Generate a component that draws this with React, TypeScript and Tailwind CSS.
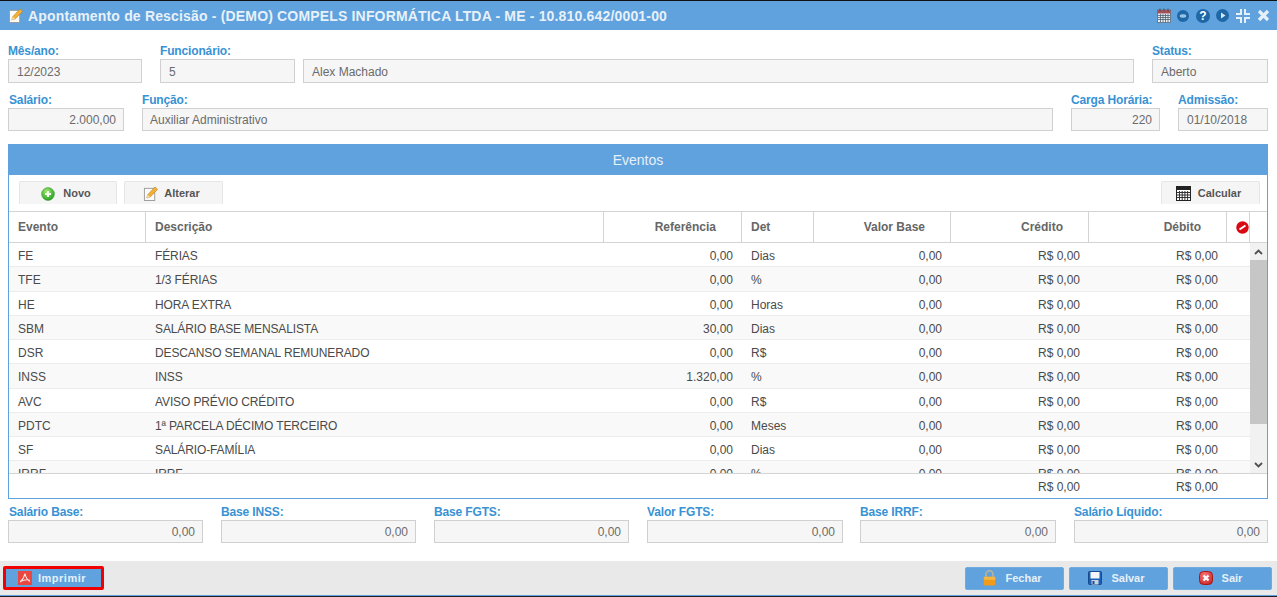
import React from "react";

const rows = [
  ["FE", "FÉRIAS", "0,00", "Dias"],
  ["TFE", "1/3 FÉRIAS", "0,00", "%"],
  ["HE", "HORA EXTRA", "0,00", "Horas"],
  ["SBM", "SALÁRIO BASE MENSALISTA", "30,00", "Dias"],
  ["DSR", "DESCANSO SEMANAL REMUNERADO", "0,00", "R$"],
  ["INSS", "INSS", "1.320,00", "%"],
  ["AVC", "AVISO PRÉVIO CRÉDITO", "0,00", "R$"],
  ["PDTC", "1ª PARCELA DÉCIMO TERCEIRO", "0,00", "Meses"],
  ["SF", "SALÁRIO-FAMÍLIA", "0,00", "Dias"],
  ["IRRF", "IRRF", "0,00", "%"],
];

function Field({ label, value, w, right, grow, pad, labelPad, tall }: { label?: string; value: string; w?: string; right?: boolean; grow?: boolean; pad?: string; labelPad?: boolean; tall?: boolean }) {
  return (
    <div className={`flex flex-col ${w ?? ""} ${grow ? "flex-1" : ""}`}>
      <div className={`h-[16px] text-[12px] leading-[16px] font-bold tracking-[-0.15px] text-[#3892d3] whitespace-nowrap ${labelPad ? "pl-[1px]" : ""}`}>{label ?? "\u00a0"}</div>
      <div className={`${tall ? "h-[24px] leading-[24px]" : "h-[23px] leading-[23px]"} border border-[#d0d0d0] bg-[#f6f6f6] text-[12px] text-[#6b6b6b] ${pad ?? "px-[8px]"} ${right ? "text-right !pr-[7px]" : ""}`}>{value}</div>
    </div>
  );
}

function Pencil({ s = 16 }: { s?: number }) {
  return (
    <svg width={s} height={s} viewBox="0 0 16 16">
      <rect x="1.5" y="2.5" width="11" height="13" fill="#fbfbfb" stroke="#9a9a9a" />
      <path d="M4 12.8 L5 9.3 L12.8 1 L15.6 3.6 L7.6 11.7 Z" fill="#f2b134" stroke="#b87a1a" strokeWidth="0.6" />
      <path d="M4 12.8 L5 9.3 L7.6 11.7 Z" fill="#f7e2b5" />
    </svg>
  );
}
function GreenPlus() {
  return (
    <svg width="14" height="14" viewBox="0 0 14 14">
      <defs><radialGradient id="g1" cx="0.4" cy="0.3" r="0.8"><stop offset="0" stopColor="#9be86a" /><stop offset="1" stopColor="#1c9a1c" /></radialGradient></defs>
      <circle cx="7" cy="7" r="6.4" fill="url(#g1)" stroke="#2a8a2a" strokeWidth="0.5" />
      <path d="M7 4v6M4 7h6" stroke="#f2fff0" strokeWidth="2.2" />
    </svg>
  );
}
function Calculator() {
  return (
    <svg width="15" height="15" viewBox="0 0 15 15">
      <rect x="0.5" y="0.5" width="14" height="14" fill="#fff" stroke="#222" />
      <rect x="1" y="1" width="13" height="3" fill="#222" />
      <path d="M1 6.5h13M1 9h13M1 11.5h13M3.5 5v9M6.2 5v9M8.9 5v9M11.6 5v9" stroke="#333" strokeWidth="1" />
    </svg>
  );
}
function NoEntry() {
  return (
    <svg width="13" height="13" viewBox="0 0 13 13">
      <circle cx="6.5" cy="6.5" r="6.2" fill="#d90812" />
      <path d="M3.5 8.5 L9.5 4.5" stroke="#fff" strokeWidth="2" />
    </svg>
  );
}
function Pdf() {
  return (
    <svg width="14" height="14" viewBox="0 0 14 14">
      <rect width="14" height="14" fill="#e8483f" />
      <path d="M7 2.5 C6.2 6 4.5 9 2 11 M7 2.5 C7.6 6 9.5 9 12 10.5 M2.5 10.5 C6 8.7 9 8.4 11.8 9.2" fill="none" stroke="#fbe4e0" strokeWidth="1.1" />
    </svg>
  );
}
function Lock() {
  return (
    <svg width="13" height="16" viewBox="0 0 13 16">
      <path d="M3 7V4.2a3.5 3.5 0 0 1 7 0V7" fill="none" stroke="#b9b39b" strokeWidth="1.6" />
      <rect x="0.8" y="6.8" width="11.4" height="8.6" rx="1" fill="#f09a1e" />
      <rect x="0.8" y="6.8" width="11.4" height="3" fill="#f6b73f" />
    </svg>
  );
}
function Floppy() {
  return (
    <svg width="14" height="14" viewBox="0 0 14 14">
      <rect x="0.5" y="0.5" width="13" height="13" rx="1" fill="#1c5fb5" stroke="#174b90" />
      <rect x="2.5" y="1" width="9" height="6.5" fill="#f2f6fb" />
      <rect x="3.5" y="9" width="7" height="4.5" fill="#c9d4e2" />
      <rect x="4.5" y="10" width="2" height="3" fill="#1c4f95" />
    </svg>
  );
}
function RedX() {
  return (
    <svg width="14" height="14" viewBox="0 0 14 14">
      <defs><radialGradient id="r1" cx="0.4" cy="0.3" r="0.85"><stop offset="0" stopColor="#f77" /><stop offset="1" stopColor="#c41c1c" /></radialGradient></defs>
      <rect x="0.5" y="0.5" width="13" height="13" rx="4" fill="url(#r1)" stroke="#a51a1a" />
      <path d="M4.5 4.5l5 5M9.5 4.5l-5 5" stroke="#fff" strokeWidth="2.2" />
    </svg>
  );
}
function Calendar() {
  return (
    <svg width="14" height="15" viewBox="0 0 14 15">
      <rect x="0.5" y="2" width="13" height="12.5" fill="#e9eef2" stroke="#5b6a78" strokeWidth="0.8" />
      <rect x="0.5" y="2" width="13" height="3.5" fill="#a6505a" />
      <path d="M3 0.5v3M7 0.5v3M11 0.5v3" stroke="#44525f" />
      <path d="M1 7.5h12M1 9.5h12M1 11.5h12M3.5 6v8M6 6v8M8.5 6v8M11 6v8" stroke="#4e5f70" strokeWidth="0.8" />
    </svg>
  );
}

const gridBody = "grid grid-cols-[137px_458px_138px_72px_137px_138px_138px_23px]";

function Tab({ icon, label, w, gap }: { icon: React.ReactNode; label: string; w: string; gap: string }) {
  return (
    <div className={`${w} ${gap} h-[23px] pr-[4px] pt-[1px] flex items-center justify-center bg-[#f5f5f5] border border-b-0 border-[#e6e6e6] rounded-t-[2px] text-[11px] font-bold text-[#555]`}>
      {icon}
      <span>{label}</span>
    </div>
  );
}

function FootBtn({ icon, label, w }: { icon: React.ReactNode; label: string; w: string }) {
  return (
    <div className={`${w} h-[23px] pr-[4px] flex items-center justify-center gap-[9px] bg-[#5fa2dd] border border-[#70abdf] rounded-[2px] text-[11px] font-bold text-[#e6f0f9]`}>
      {icon}
      <span>{label}</span>
    </div>
  );
}

export default function App() {
  return (
    <div className="h-[597px] w-[1277px] overflow-hidden flex flex-col bg-white font-['Liberation_Sans',Arial,sans-serif]">
      <div className="h-[1px] bg-[#111]" />
      <div className="h-[29px] shrink-0 bg-[#5fa2dd] flex items-center pl-[8px] pr-[7px]">
        <Pencil s={15} />
        <div className="ml-[5px] pt-[1px] text-[14px] font-bold text-[#e8f1f9] tracking-[0.17px] whitespace-nowrap">
          Apontamento de Rescisão - (DEMO) COMPELS INFORMÁTICA LTDA - ME - 10.810.642/0001-00
        </div>
        <div className="ml-auto flex items-center">
          <Calendar />
          <svg width="12" height="12" viewBox="0 0 12 12" className="ml-[6px]">
            <circle cx="6" cy="6" r="6" fill="#1f68a8" />
            <rect x="3.2" y="4.8" width="5.6" height="2.4" rx="1.2" fill="#8fbbe0" stroke="#cfe3f3" strokeWidth="0.6" />
          </svg>
          <svg width="14" height="14" viewBox="0 0 14 14" className="ml-[7px]">
            <circle cx="7" cy="7" r="7" fill="#1f68a8" />
            <text x="7" y="11.2" textAnchor="middle" fontSize="12" fontWeight="700" fill="#fff" fontFamily="Liberation Sans">?</text>
          </svg>
          <svg width="13" height="13" viewBox="0 0 13 13" className="ml-[6px]">
            <circle cx="6.5" cy="6.5" r="6.5" fill="#1f68a8" />
            <path d="M5 3.5 L9.5 6.5 L5 9.5 Z" fill="#d8e8f5" />
          </svg>
          <svg width="14" height="14" viewBox="0 0 14 14" className="ml-[7px]">
            <path d="M5 0v5H0M9 0v5h5M5 14V9H0M9 14V9h5" fill="none" stroke="#e6f0f9" strokeWidth="2" />
          </svg>
          <svg width="13" height="13" viewBox="0 0 13 13" className="ml-[7px]">
            <path d="M2 2l9 9M11 2l-9 9" stroke="#e6f0f9" strokeWidth="3.2" />
          </svg>
        </div>
      </div>

      <div className="flex pl-[8px] pr-[9px] pt-[13px] gap-[8px] h-[53px] shrink-0">
        <Field label="Mês/ano:" value="12/2023" w="w-[134px]" tall />
        <Field label="Funcionário:" value="5" w="w-[135px] ml-[10px]" tall />
        <Field value="Alex Machado" grow tall />
        <Field label="Status:" value="Aberto" w="w-[116px] ml-[10px]" tall />
      </div>
      <div className="flex pl-[8px] pr-[9px] pt-[9px] gap-[8px] h-[48px] shrink-0">
        <Field label="Salário:" value="2.000,00" w="w-[116px]" right labelPad />
        <Field label="Função:" value="Auxiliar Administrativo" w="ml-[10px]" grow pad="px-[7px]" />
        <Field label="Carga Horária:" value="220" w="w-[89px] ml-[10px]" right />
        <Field label="Admissão:" value="01/10/2018" w="w-[90px] ml-[10px]" />
      </div>

      <div className="ml-[8px] mr-[9px] mt-[13px] h-[355px] shrink-0 border border-[#5fa2dd] flex flex-col">
        <div className="h-[30px] shrink-0 bg-[#5fa2dd] text-center text-[14px] leading-[30px] text-[#e6f0f9]">Eventos</div>
        <div className="h-[37px] shrink-0 flex items-end justify-between pl-[10px] pr-[7px] pb-[7px] border-b border-[#d4d4d4]">
          <div className="flex gap-[7px]">
            <Tab icon={<GreenPlus />} label="Novo" w="w-[98px]" gap="gap-[8px]" />
            <Tab icon={<Pencil s={15} />} label="Alterar" w="w-[99px]" gap="gap-[6px]" />
          </div>
          <Tab icon={<Calculator />} label="Calcular" w="w-[99px]" gap="gap-[7px]" />
        </div>
        <div className="h-[31px] shrink-0 flex border-b border-[#d4d4d4] text-[12px] font-bold text-[#666]">
          <div className="w-[137px] border-r border-[#d4d4d4] pl-[9px] leading-[30px]">Evento</div>
          <div className="w-[458px] border-r border-[#d4d4d4] pl-[9px] leading-[30px]">Descrição</div>
          <div className="w-[138px] border-r border-[#d4d4d4] pr-[25px] text-right leading-[30px]">Referência</div>
          <div className="w-[72px] border-r border-[#d4d4d4] pl-[9px] leading-[30px]">Det</div>
          <div className="w-[137px] border-r border-[#d4d4d4] pr-[25px] text-right leading-[30px]">Valor Base</div>
          <div className="w-[138px] border-r border-[#d4d4d4] pr-[25px] text-right leading-[30px]">Crédito</div>
          <div className="w-[138px] border-r border-[#d4d4d4] pr-[25px] text-right leading-[30px]">Débito</div>
          <div className="w-[23px] border-r border-[#d4d4d4] flex items-center justify-end"><NoEntry /></div>
        </div>
        <div className="h-[231px] shrink-0 flex overflow-hidden border-b border-[#d4d4d4]">
          <div className="w-[1241px] overflow-hidden">
            {rows.map((r, i) => (
              <div key={r[0]} className={`${gridBody} h-[24.25px] pt-[1px] border-b border-[#ececec] text-[12px] leading-[24px] text-[#4a4a4a] ${i % 2 ? "bg-[#f9f9f9]" : "bg-white"}`}>
                <div className="pl-[9px]">{r[0]}</div>
                <div className="pl-[9px] tracking-[-0.12px]">{r[1]}</div>
                <div className="pr-[9px] text-right">{r[2]}</div>
                <div className="pl-[9px]">{r[3]}</div>
                <div className="pr-[9px] text-right">0,00</div>
                <div className="pr-[9px] text-right">R$ 0,00</div>
                <div className="pr-[9px] text-right">R$ 0,00</div>
              </div>
            ))}
          </div>
          <div className="w-[17px] flex flex-col bg-[#f1f1f1]">
            <div className="h-[17px] flex items-center justify-center">
              <svg width="9" height="6" viewBox="0 0 9 6"><path d="M1 5l3.5-3.5L8 5" fill="none" stroke="#505050" strokeWidth="1.8" /></svg>
            </div>
            <div className="h-[164px] bg-[#c6c6c6]" />
            <div className="flex-1" />
            <div className="h-[17px] flex items-center justify-center">
              <svg width="9" height="6" viewBox="0 0 9 6"><path d="M1 1l3.5 3.5L8 1" fill="none" stroke="#505050" strokeWidth="1.8" /></svg>
            </div>
          </div>
        </div>
        <div className="flex-1 flex pt-[1px] text-[12px] leading-[24px] text-[#4a4a4a]">
          <div className="w-[1080px] text-right pr-[9px]">R$ 0,00</div>
          <div className="w-[138px] text-right pr-[9px]">R$ 0,00</div>
        </div>
      </div>

      <div className="flex pl-[8px] pr-[9px] pt-[5px] h-[44px] shrink-0 gap-[18px]">
        <Field label="Salário Base:" value="0,00" w="w-[195px]" right labelPad />
        <Field label="Base INSS:" value="0,00" w="w-[195px]" right />
        <Field label="Base FGTS:" value="0,00" w="w-[195px]" right />
        <Field label="Valor FGTS:" value="0,00" w="w-[196px]" right />
        <Field label="Base IRRF:" value="0,00" w="w-[196px] -ml-[1px]" right />
        <Field label="Salário Líquido:" value="0,00" w="w-[194px]" right />
      </div>

      <div className="mt-[18px] h-[34px] shrink-0 bg-[#e9e9e9] flex items-center justify-between pl-[3px] pr-[5px]">
        <div className="w-[101px] h-[24px] border-[3px] border-[#f00000] bg-[#5fa2dd] rounded-[2px] pr-[3px] flex items-center justify-center gap-[6px] text-[11px] font-bold text-[#e6f0f9] tracking-[0.5px]">
          <Pdf />
          <span>Imprimir</span>
        </div>
        <div className="flex gap-[5px]">
          <FootBtn icon={<Lock />} label="Fechar" w="w-[99px]" />
          <FootBtn icon={<Floppy />} label="Salvar" w="w-[99px]" />
          <FootBtn icon={<RedX />} label="Sair" w="w-[99px]" />
        </div>
      </div>
      <div className="h-[1px] shrink-0 bg-[#5fa2dd]" />
      <div className="flex-1 bg-[#222]" />
    </div>
  );
}
